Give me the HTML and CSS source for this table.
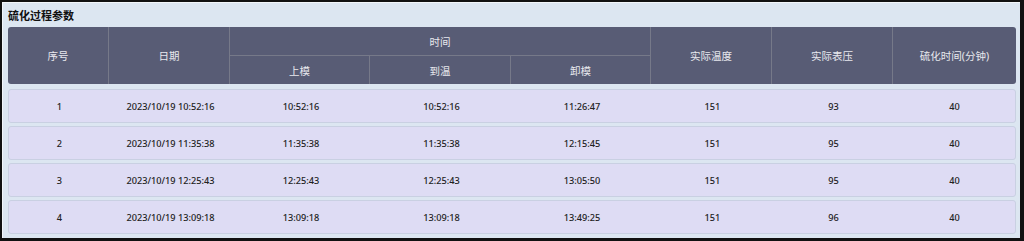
FILE: index.html
```html
<!DOCTYPE html>
<html lang="zh">
<head>
<meta charset="utf-8">
<link rel="stylesheet" href="styles.css">
</head>
<body>
<div class="frame">
  <div class="title">硫化过程参数</div>
  <div class="thead">
    <div class="th span2 c1">序号</div>
    <div class="th span2 c2">日期</div>
    <div class="th group">时间</div>
    <div class="th sub c3">上模</div>
    <div class="th sub c4">到温</div>
    <div class="th sub c5">卸模</div>
    <div class="th span2 c6">实际温度</div>
    <div class="th span2 c7">实际表压</div>
    <div class="th span2 c8 last">硫化时间(分钟)</div>
  </div>
  <div class="rows">
    <div class="row"><span>1</span><span>2023/10/19 10:52:16</span><span>10:52:16</span><span>10:52:16</span><span>11:26:47</span><span>151</span><span>93</span><span>40</span></div>
    <div class="row"><span>2</span><span>2023/10/19 11:35:38</span><span>11:35:38</span><span>11:35:38</span><span>12:15:45</span><span>151</span><span>95</span><span>40</span></div>
    <div class="row"><span>3</span><span>2023/10/19 12:25:43</span><span>12:25:43</span><span>12:25:43</span><span>13:05:50</span><span>151</span><span>95</span><span>40</span></div>
    <div class="row"><span>4</span><span>2023/10/19 13:09:18</span><span>13:09:18</span><span>13:09:18</span><span>13:49:25</span><span>151</span><span>96</span><span>40</span></div>
  </div>
</div>
</body>
</html>
```
FILE: styles.css
```css
html, body {
  margin: 0;
  padding: 0;
  background: #111;
}
body {
  width: 1024px;
  height: 241px;
  font-family: "Noto Sans", "Noto Sans CJK SC", sans-serif;
}
.frame {
  box-sizing: border-box;
  width: 1024px;
  height: 241px;
  border-style: solid;
  border-color: #111;
  border-width: 2px 4px 3px 2px;
  background: #dce6f1;
  box-shadow: inset 1px 1px 0 #f2f6fa;
  padding: 0 4px 0 6px;
  display: flex;
  flex-direction: column;
}
.title {
  height: 25px;
  line-height: 28px;
  font-size: 11px;
  font-weight: bold;
  color: #111;
}
.thead {
  display: grid;
  grid-template-columns: 101px 121px 140px 141px 140px 121px 121px 1fr;
  grid-template-rows: 29px 28px;
  background: #585c75;
  border-radius: 3px;
  color: #e8e9ee;
  font-size: 10.5px;
}
.th {
  display: flex;
  align-items: center;
  justify-content: center;
  border-right: 1px solid #767989;
}
.th.last { border-right: none; }
.span2 { grid-row: 1 / span 2; }
.c1 { grid-column: 1; }
.c2 { grid-column: 2; }
.c3 { grid-column: 3; }
.c4 { grid-column: 4; }
.c5 { grid-column: 5; }
.c6 { grid-column: 6; }
.c7 { grid-column: 7; }
.c8 { grid-column: 8; }
.group {
  grid-column: 3 / span 3;
  grid-row: 1;
  border-bottom: 1px solid #767989;
}
.sub { grid-row: 2; }
.rows {
  margin-top: 5px;
  display: flex;
  flex-direction: column;
  gap: 3px;
}
.row {
  box-sizing: border-box;
  height: 34px;
  display: grid;
  grid-template-columns: 101px 121px 140px 141px 140px 121px 121px 1fr;
  align-items: center;
  background: #dedcf4;
  border: 1px solid #c9d0e2;
  border-radius: 3px;
  font-size: 9.2px;
  font-weight: 500;
  color: #222;
}
.row span {
  text-align: center;
}
```
